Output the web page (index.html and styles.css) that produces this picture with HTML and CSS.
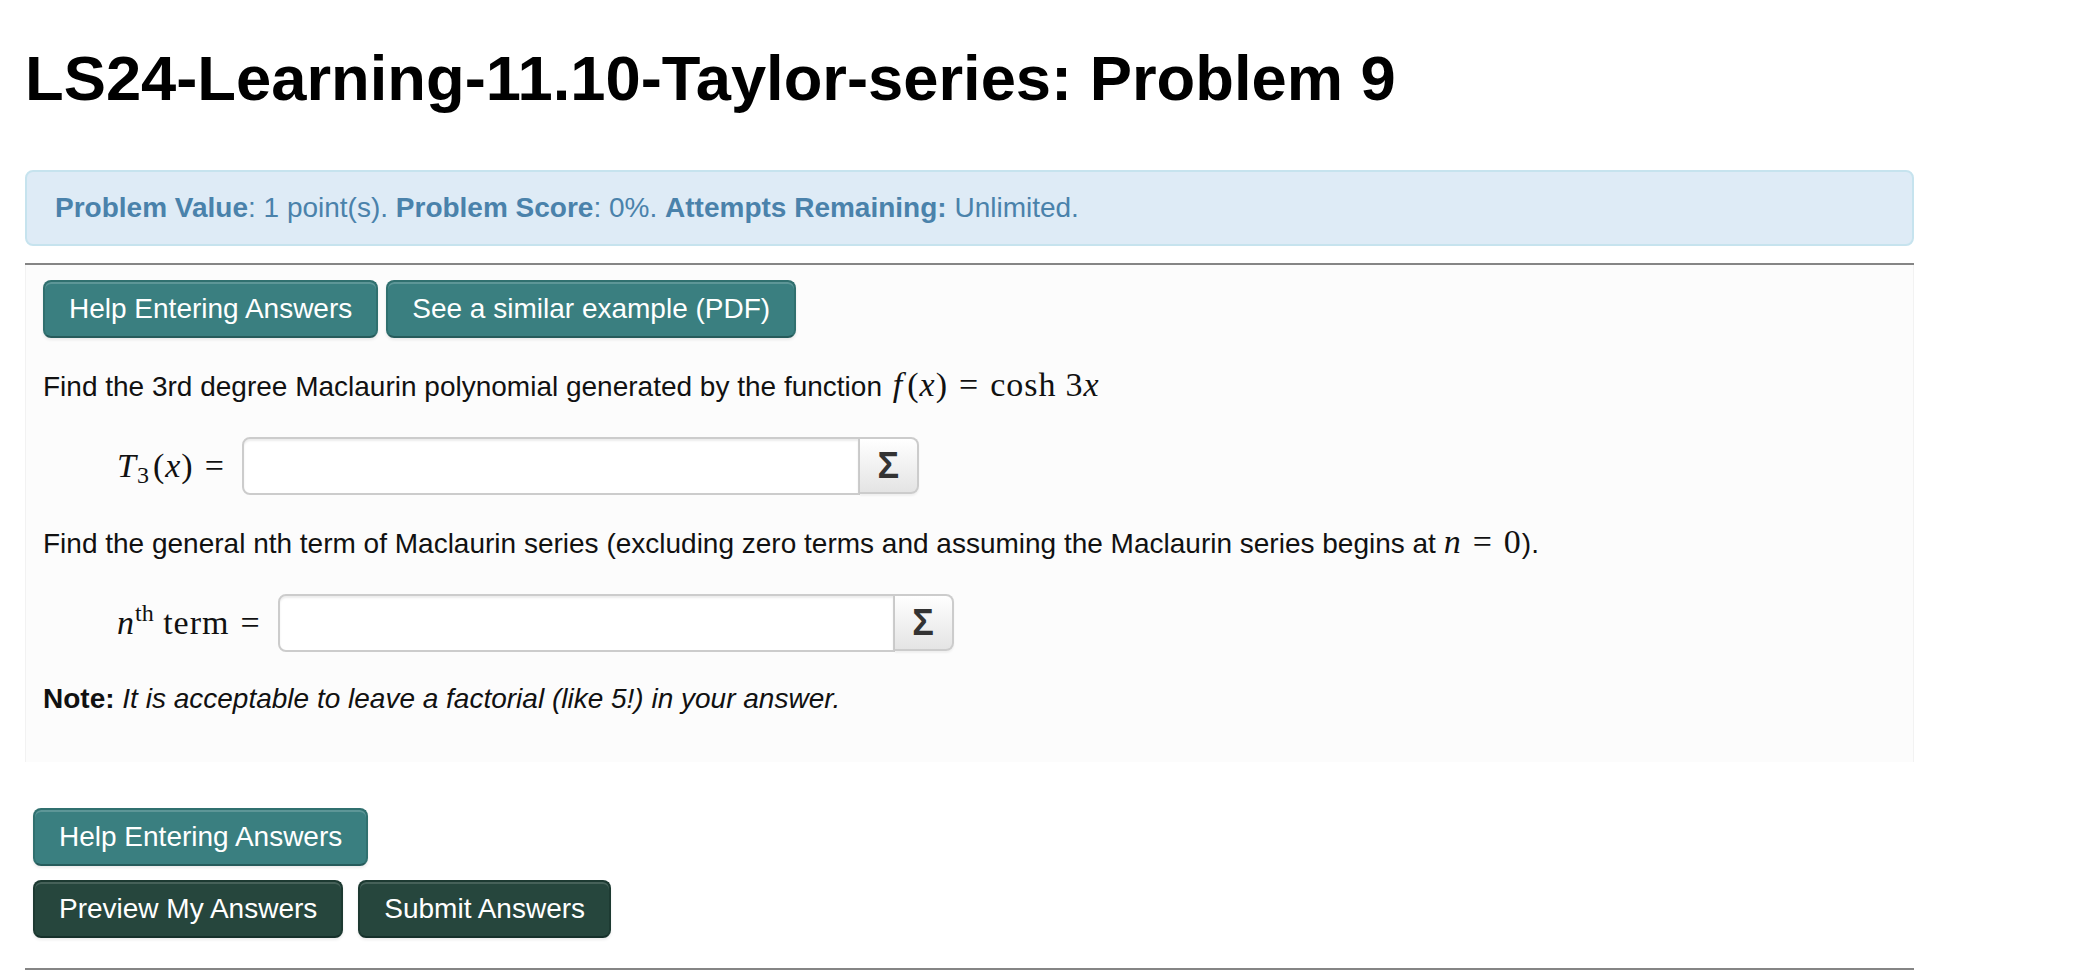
FILE: index.html
```html
<!DOCTYPE html>
<html lang="en">
<head>
<meta charset="utf-8">
<title>LS24-Learning-11.10-Taylor-series: Problem 9</title>
<link rel="stylesheet" href="styles.css">
</head>
<body>
<div class="page">
  <h1 class="title">LS24-Learning-11.10-Taylor-series: Problem 9</h1>

  <div class="alert">
    <b>Problem Value</b>: 1 point(s). <b>Problem Score</b>: 0%. <b>Attempts Remaining:</b> Unlimited.
  </div>

  <hr class="rule">

  <div class="problem">
    <div class="btn-row">
      <button class="btn btn-teal" type="button">Help Entering Answers</button>
      <button class="btn btn-teal" type="button">See a similar example (PDF)</button>
    </div>

    <p class="text">Find the 3rd degree Maclaurin polynomial generated by the function <span class="math"><i class="f">f</i>(<i>x</i>)<span class="rel">=</span>cosh<span class="thin"></span>3<i>x</i></span></p>

    <div class="answer-row">
      <span class="math label"><i>T</i><sub>3</sub>(<i>x</i>)<span class="rel">=</span></span>
      <div class="answer">
        <input class="answer-input answer-input-1" type="text" aria-label="T3(x)">
        <span class="sigma">Σ</span>
      </div>
    </div>

    <p class="text">Find the general nth term of Maclaurin series (excluding zero terms and assuming the Maclaurin series begins at <span class="math"><i>n</i><span class="rel">=</span>0</span>).</p>

    <div class="answer-row">
      <span class="math label"><i>n</i><sup>th</sup> term<span class="rel">=</span></span>
      <div class="answer">
        <input class="answer-input answer-input-2" type="text" aria-label="nth term">
        <span class="sigma">Σ</span>
      </div>
    </div>

    <p class="text note"><b>Note:</b> <i>It is acceptable to leave a factorial (like 5!) in your answer.</i></p>
  </div>

  <div class="actions">
    <div class="btn-row">
      <button class="btn btn-teal" type="button">Help Entering Answers</button>
    </div>
    <div class="btn-row btn-row-wide">
      <button class="btn btn-dark" type="button">Preview My Answers</button>
      <button class="btn btn-dark" type="button">Submit Answers</button>
    </div>
  </div>

  <hr class="rule rule-bottom">
</div>
</body>
</html>
```

FILE: styles.css
```css
html, body {
  margin: 0;
  padding: 0;
  background: #ffffff;
}

body {
  font-family: "Liberation Sans", Arial, Helvetica, sans-serif;
  font-size: 28px;
  line-height: 40px;
  color: #111111;
}

.page {
  width: 1889px;
  padding-left: 25px;
}

.title {
  margin: 38px 0 52px 0;
  font-size: 63.3px;
  line-height: 80px;
  font-weight: bold;
  color: #000000;
}

.alert {
  border: 2px solid #c6e3ee;
  background: #deebf6;
  border-radius: 8px;
  padding: 16px 28px;
  color: #4a82ab;
}

.alert b {
  font-weight: bold;
}

.rule {
  margin: 17px 0 0 0;
  border: 0;
  height: 2px;
  background: #858585;
}

.problem {
  background: #fcfcfc;
  border-left: 1px solid #f2f2f2;
  border-right: 1px solid #f2f2f2;
  padding: 15px 16px 43px 17px;
}

.btn-row {
  display: flex;
  gap: 8px;
}

.btn-row-wide {
  gap: 15px;
  margin-top: 14px;
}

.btn {
  font-family: "Liberation Sans", Arial, Helvetica, sans-serif;
  font-size: 28px;
  line-height: 38px;
  padding: 8px 24px;
  border-radius: 8px;
  color: #ffffff;
  cursor: pointer;
  margin: 0;
}

.btn-teal {
  background: #3a7f80;
  border: 2px solid #30706f;
  border-bottom-color: #265b5b;
  box-shadow: inset 0 2px 0 rgba(255, 255, 255, 0.18), 0 2px 3px rgba(0, 0, 0, 0.08);
}

.btn-dark {
  background: #26463d;
  border: 2px solid #1d3a32;
  border-bottom-color: #15302a;
  box-shadow: inset 0 2px 0 rgba(255, 255, 255, 0.15), 0 2px 3px rgba(0, 0, 0, 0.08);
}

.text {
  margin: 27px 0 0 0;
  color: #111111;
}

.math {
  font-family: "Liberation Serif", "Times New Roman", serif;
  font-size: 34px;
  letter-spacing: 1px;
  color: #111111;
}

.math i {
  font-style: italic;
}

.math .f {
  padding: 0 4px 0 3px;
}

.math .rel {
  margin: 0 11px;
}

.math .thin {
  display: inline-block;
  width: 9px;
}

.math sub {
  font-size: 24px;
  vertical-align: -6px;
  line-height: 0;
  margin-right: 3px;
}

.math sup {
  font-size: 24px;
  vertical-align: 13px;
  line-height: 0;
  letter-spacing: 0;
}

.answer-row {
  display: flex;
  align-items: center;
  margin-top: 30px;
  padding-left: 74px;
  height: 58px;
}

.answer-row + .text {
  margin-top: 27px;
}

.text + .answer-row {
  margin-top: 30px;
}

.label {
  line-height: 40px;
  white-space: nowrap;
  margin-right: 6px;
}

.answer {
  display: flex;
  align-items: stretch;
  height: 58px;
}

.answer-input {
  box-sizing: border-box;
  height: 58px;
  width: 618px;
  border: 2px solid #cccccc;
  border-radius: 8px 0 0 8px;
  box-shadow: inset 0 2px 2px rgba(0, 0, 0, 0.075);
  background: #ffffff;
  font-family: "Liberation Sans", Arial, sans-serif;
  font-size: 28px;
  padding: 8px 12px;
  margin: 0;
  outline: none;
}

.answer-input-2 {
  width: 617px;
}

.sigma {
  box-sizing: border-box;
  width: 59px;
  height: 57px;
  border: 2px solid #cccccc;
  border-left: 0;
  border-radius: 0 8px 8px 0;
  background: linear-gradient(#ffffff, #e4e4e4);
  box-shadow: 0 2px 2px rgba(0, 0, 0, 0.05);
  display: flex;
  align-items: center;
  justify-content: center;
  font-family: "Liberation Sans", Arial, sans-serif;
  font-weight: bold;
  font-size: 36px;
  color: #333333;
}

.note b {
  font-weight: bold;
}

.note i {
  font-style: italic;
}

.actions {
  padding: 46px 0 0 8px;
}

.rule-bottom {
  margin-top: 30px;
}
```
